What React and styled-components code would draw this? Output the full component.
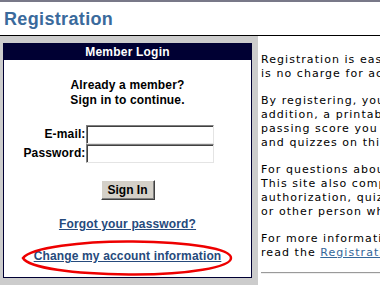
import React from 'react'
import styled, { createGlobalStyle } from 'styled-components'

const GlobalStyle = createGlobalStyle`
  html, body {
    margin: 0;
    padding: 0;
    overflow: hidden;
    background: #ffffff;
  }
`

const Page = styled.div`
  width: 380px;
  height: 285px;
  overflow: hidden;
  font-family: "Liberation Sans", Arial, sans-serif;
`

const TopBar = styled.div`
  height: 2px;
  background: #787888;
`

const Header = styled.div`
  padding: 6px 0 5px 4px;
  border-bottom: 1px solid #000000;

  h1 {
    margin: 0;
    font-size: 18px;
    line-height: 22px;
    font-weight: bold;
    letter-spacing: 0.35px;
    color: #3a6a9c;
  }
`

const Main = styled.div`
  display: flex;
  height: 249px;
`

const SideColumn = styled.div`
  flex: 0 0 258px;
  box-sizing: border-box;
  padding: 7px 6px 0 3px;
  background: #cccccc;
`

const Panel = styled.div`
  width: 249px;
  box-sizing: border-box;
  border: 1px solid #000033;
  background: #ffffff;
`

const PanelTitle = styled.div`
  height: 16px;
  line-height: 16px;
  background: #000033;
  color: #ffffff;
  font-size: 12px;
  font-weight: bold;
  letter-spacing: 0.2px;
  text-align: center;
`

const PanelBody = styled.div`
  display: flex;
  flex-direction: column;
  align-items: center;
  gap: 17px;
  padding: 18px 0 13px;
  font-size: 12px;
  font-weight: bold;
  line-height: 15px;
  letter-spacing: 0.15px;
  color: #000000;
`

const Intro = styled.div`
  text-align: center;
`

const LoginForm = styled.div`
  display: grid;
  grid-template-columns: auto 128px;
  grid-auto-rows: 19px;
  padding-right: 18px;

  label {
    align-self: center;
    text-align: right;
  }
`

const Field = styled.input`
  box-sizing: border-box;
  width: 128px;
  height: 19px;
  margin: 0;
  border: 1px solid;
  border-color: #808080 #e4e4e4 #e4e4e4 #808080;
  box-shadow: inset 1px 1px #404040;
  background: #ffffff;
`

const SignIn = styled.button`
  box-sizing: border-box;
  width: 54px;
  height: 20px;
  padding: 0;
  border: 1px solid;
  border-color: #ffffff #404040 #404040 #ffffff;
  box-shadow: inset -1px -1px #808080;
  background: #d4d0c8;
  font-family: "Liberation Sans", Arial, sans-serif;
  font-size: 12px;
  font-weight: bold;
  color: #000000;
`

const LinkRow = styled.div`
  position: relative;
`

const PanelLink = styled.a`
  color: #264a7c;
  text-decoration: underline;
`

const Circled = styled.svg`
  position: absolute;
  left: 50%;
  top: -9px;
  transform: translateX(-50%);
  overflow: visible;
  pointer-events: none;
`

const InfoColumn = styled.div`
  flex: 1;
  min-width: 0;
  padding: 17px 0 0 3px;
  font-family: "DejaVu Sans", Verdana, sans-serif;
  font-size: 11px;
  letter-spacing: 1.05px;
  line-height: 14px;
  color: #000000;
`

const Para = styled.p`
  margin: 0 0 13px;
  white-space: nowrap;

  &:last-of-type {
    margin-bottom: 12px;
  }

  a {
    color: #336699;
    text-decoration: underline;
  }
`

const Rule = styled.hr`
  margin: 0;
  height: 0;
  border: none;
  border-top: 1px solid #9a9a9a;
  border-bottom: 1px solid #eeeeee;
`

export default function App() {
  return (
    <Page>
      <GlobalStyle />
      <TopBar />
      <Header>
        <h1>Registration</h1>
      </Header>
      <Main>
        <SideColumn>
          <Panel>
            <PanelTitle>Member Login</PanelTitle>
            <PanelBody>
              <Intro>
                Already a member?<br />
                Sign in to continue.
              </Intro>
              <LoginForm>
                <label htmlFor="email">E-mail:</label>
                <Field id="email" type="text" />
                <label htmlFor="password">Password:</label>
                <Field id="password" type="password" />
              </LoginForm>
              <SignIn type="button">Sign In</SignIn>
              <LinkRow>
                <PanelLink href="#">Forgot your password?</PanelLink>
              </LinkRow>
              <LinkRow>
                <PanelLink href="#">Change my account information</PanelLink>
                <Circled width="212" height="36" viewBox="0 0 212 36">
                  <path
                    d="M2 18 C 10 8, 60 1, 112 1.5 C 170 2, 210 9, 210 18 C 210 27, 168 35, 108 34.5 C 52 34, 8 28, 2 18 Z"
                    fill="none"
                    stroke="#ee0000"
                    strokeWidth="2.5"
                  />
                </Circled>
              </LinkRow>
            </PanelBody>
          </Panel>
        </SideColumn>
        <InfoColumn>
          <Para>
            Registration is easy, and there<br />
            is no charge for access to this site.
          </Para>
          <Para>
            By registering, you may take the tests. In<br />
            addition, a printable certificate is issued<br />
            passing score you achieve on the final tests<br />
            and quizzes on this site.
          </Para>
          <Para>
            For questions about registration, contact us.<br />
            This site also complies with any required<br />
            authorization, quiz or test given by a teacher<br />
            or other person who supervises your work.
          </Para>
          <Para>
            For more information on registering, please<br />
            read the <a href="#">Registration FAQ</a>.
          </Para>
          <Rule />
        </InfoColumn>
      </Main>
    </Page>
  )
}
